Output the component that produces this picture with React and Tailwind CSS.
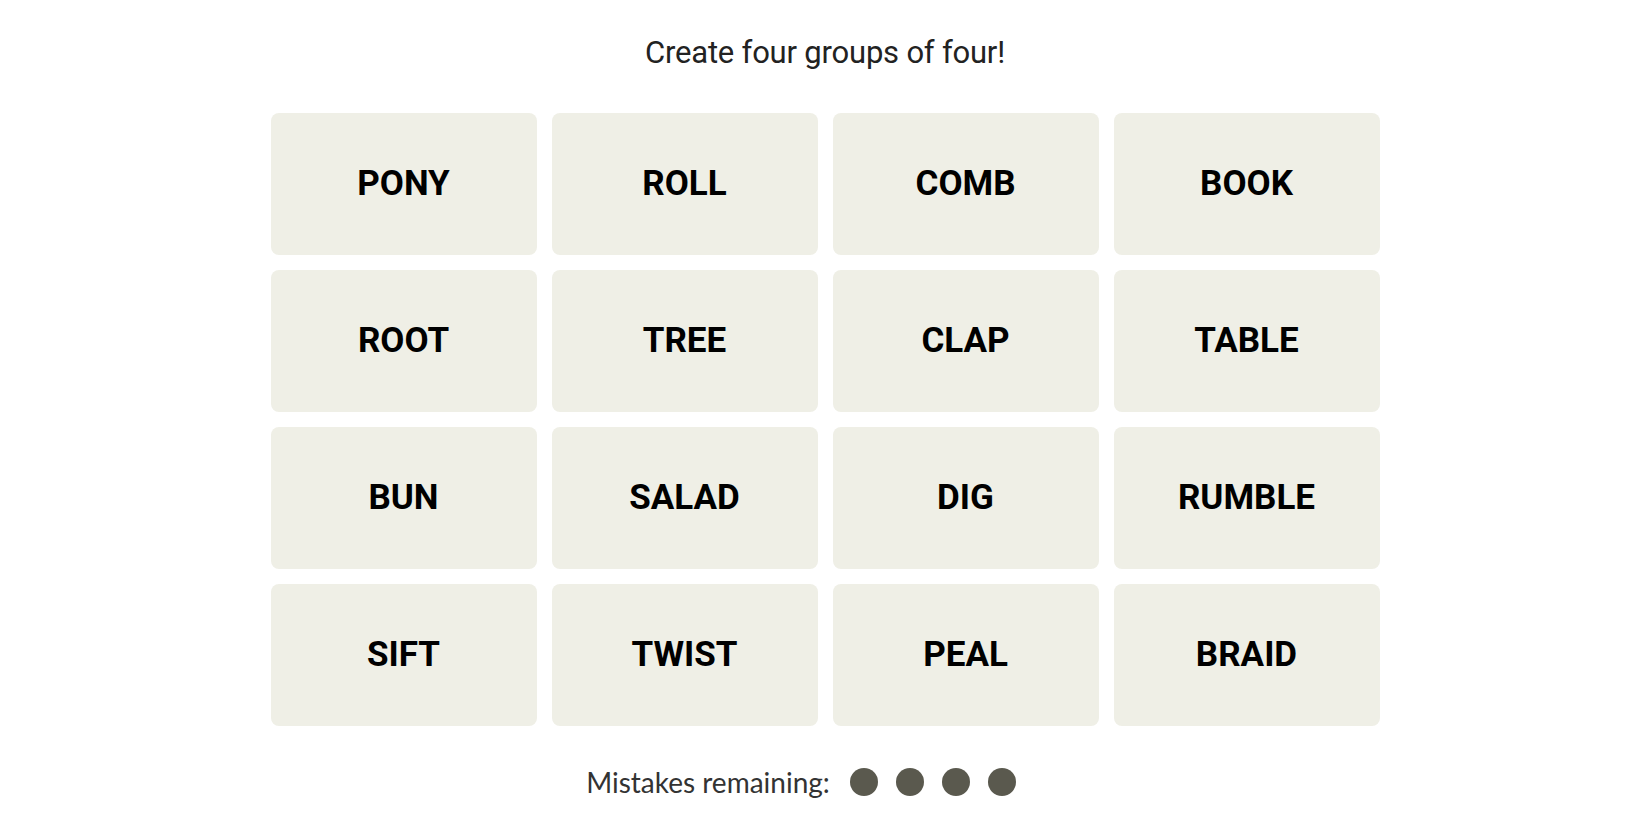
import React from "react";

const words = [
    "PONY", "ROLL", "COMB", "BOOK",
    "ROOT", "TREE", "CLAP", "TABLE",
    "BUN", "SALAD", "DIG", "RUMBLE",
    "SIFT", "TWIST", "PEAL", "BRAID",
];

export default function App() {
    return (
        <div className="min-h-screen bg-white flex flex-col items-center">
            <h1 className="mt-[35px] h-[36px] leading-[36px] text-[31px] font-normal tracking-[-0.2px] text-[#222] font-['Roboto',sans-serif]">
                Create four groups of four!
            </h1>

            <div className="mt-[42px] grid grid-cols-[repeat(4,266px)] auto-rows-[142px] gap-x-[15px] gap-y-[15px]">
                {words.map((w) => (
                    <Tile key={w} word={w} />
                ))}
            </div>

            <div className="mt-[39px] flex items-center pr-[48px]">
                <span className="text-[28px] leading-[34px] text-[#333] font-['Lato',sans-serif]">
                    Mistakes remaining:
                </span>
                <div className="ml-[20px] flex gap-[18px]">
                    {[0, 1, 2, 3].map((i) => (
                        <span key={i} className="w-[28px] h-[28px] rounded-full bg-[#5a594e]"></span>
                    ))}
                </div>
            </div>
        </div>
    );
}

function Tile({ word }) {
    return (
        <button
            type="button"
            className="flex items-center justify-center rounded-lg bg-[#efefe6] text-[35px] font-bold text-black font-['Roboto',sans-serif]"
        >
            {word}
        </button>
    );
}
